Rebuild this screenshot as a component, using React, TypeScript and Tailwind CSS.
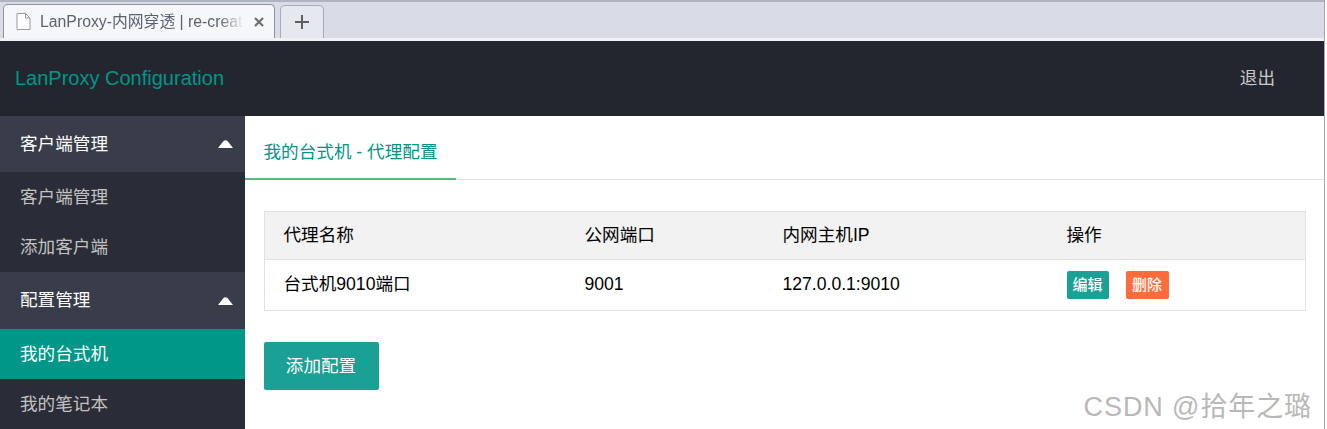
import React from 'react'

const font = { fontFamily: '"Liberation Sans", "Noto Sans CJK SC", sans-serif' }

const Caret = () => (
  <svg width="15" height="8" viewBox="0 0 15 8" className="block">
    <path d="M0 8 L5.5 1 Q7.5 -0.5 9.5 1 L15 8 Z" fill="#ffffff" />
  </svg>
)

const SideHead = ({ label, tall }: { label: string; tall?: boolean }) => (
  <div className={`flex items-center justify-between pl-[20px] pr-3 text-[17.6px] text-white bg-[#393d49] ${tall ? 'h-[57px]' : 'h-[56px]'}`}>
    <span>{label}</span>
    <Caret />
  </div>
)

const SideItem = ({ label, active }: { label: string; active?: boolean }) => (
  <div className={`flex h-[50px] items-center pl-[20px] text-[17.6px] ${active ? 'bg-[#009688] text-white' : 'bg-[#2a2d37] text-[#c2c2c2]'}`}>
    {label}
  </div>
)

export default function App() {
  return (
    <div style={font} className="relative h-[429px] w-[1327px] overflow-hidden bg-white">
      <div className="flex h-full w-[1325px] flex-col border-r border-r-[#a8a8a8]">
        {/* browser tabs */}
        <div className="flex h-[41px] shrink-0 items-end gap-[5px] border-t-2 border-b-[3px] border-t-[#b0b3c0] border-b-[#f0f1f5] bg-[#d9dbe6] pl-[3px]">
          <div className="flex h-[34px] w-[272px] items-center rounded-t-[5px] border border-b-0 border-[#8f929c] bg-[#f6f7fa] pl-[12px] pr-[10px] text-[15.8px] text-[#5b6272]">
            <svg width="15" height="17" viewBox="0 0 15 17" className="mr-[9px] shrink-0">
              <path d="M1 .5 H9.5 L14 5 V16.5 H1 Z M9.5 .5 V5 H14" fill="#ffffff" stroke="#9a9a9a" />
            </svg>
            <span className="w-[204px] overflow-hidden whitespace-nowrap [mask-image:linear-gradient(to_right,#000_88%,transparent_100%)]">
              LanProxy-内网穿透 | re-creat
            </span>
            <svg width="10" height="10" viewBox="0 0 10 10" className="ml-auto shrink-0">
              <path d="M1 1 L9 9 M9 1 L1 9" stroke="#6f6f6f" strokeWidth="2.2" />
            </svg>
          </div>
          <div className="flex h-[33px] w-[44px] items-center justify-center rounded-t-[5px] border border-b-0 border-[#a9acb8] bg-[#e6e8f0]">
            <svg width="14" height="14" viewBox="0 0 14 14">
              <path d="M7 0 V14 M0 7 H14" stroke="#5f5f5f" strokeWidth="2" />
            </svg>
          </div>
        </div>

        {/* header */}
        <div className="flex h-[75px] shrink-0 items-center justify-between bg-[#23262e] pl-[15px] pr-[49px]">
          <span className="-mt-[2px] text-[20px] text-[#009688]">LanProxy Configuration</span>
          <span className="text-[17.6px] text-[#c9c9c9]">退出</span>
        </div>

        <div className="flex min-h-0 flex-1">
          {/* sidebar */}
          <div className="w-[245px] shrink-0 overflow-hidden bg-[#393d49]">
            <SideHead label="客户端管理" />
            <SideItem label="客户端管理" />
            <SideItem label="添加客户端" />
            <SideHead label="配置管理" tall />
            <SideItem label="我的台式机" active />
            <SideItem label="我的笔记本" />
          </div>

          {/* content */}
          <div className="min-w-0 flex-1">
            <div className="h-[64px] border-b border-[#e2e2e2]">
              <div className="flex h-[64px] w-[211px] items-center justify-center border-b-2 border-[#5fb878] pt-[10px] text-[17.6px] text-[#009688]">
                我的台式机 - 代理配置
              </div>
            </div>

            <div className="ml-[19px] mr-[18px] mt-[31px] border border-[#e2e2e2] text-[17.6px] text-black">
              <div className="grid h-[48px] grid-cols-[301px_198px_284px_1fr] items-center border-b border-[#e2e2e2] bg-[#f2f2f2] pl-[18.5px]">
                <span>代理名称</span>
                <span>公网端口</span>
                <span>内网主机IP</span>
                <span>操作</span>
              </div>
              <div className="grid h-[50px] grid-cols-[301px_198px_284px_1fr] items-center pl-[18.5px]">
                <span className="-mt-px">台式机9010端口</span>
                <span className="-mt-px">9001</span>
                <span className="-mt-px">127.0.0.1:9010</span>
                <div className="flex gap-[17px] text-[15px] font-medium text-white">
                  <span className="flex h-[28px] w-[42px] items-center justify-center rounded-[2px] bg-[#1aa094]">编辑</span>
                  <span className="flex h-[28px] w-[43px] items-center justify-center rounded-[2px] bg-[#ff6b3b]">删除</span>
                </div>
              </div>
            </div>

            <button className="ml-[19px] mt-[31px] block h-[48px] w-[115px] rounded-[2px] bg-[#1aa094] pr-[1px] text-[17.6px] text-white">
              添加配置
            </button>
          </div>
        </div>
      </div>

      {/* watermark */}
      <div className="absolute bottom-[8px] right-[15px] text-[27px] leading-none tracking-[0.9px] text-[#b8b8b8]">
        CSDN @拾年之璐
      </div>
    </div>
  )
}
